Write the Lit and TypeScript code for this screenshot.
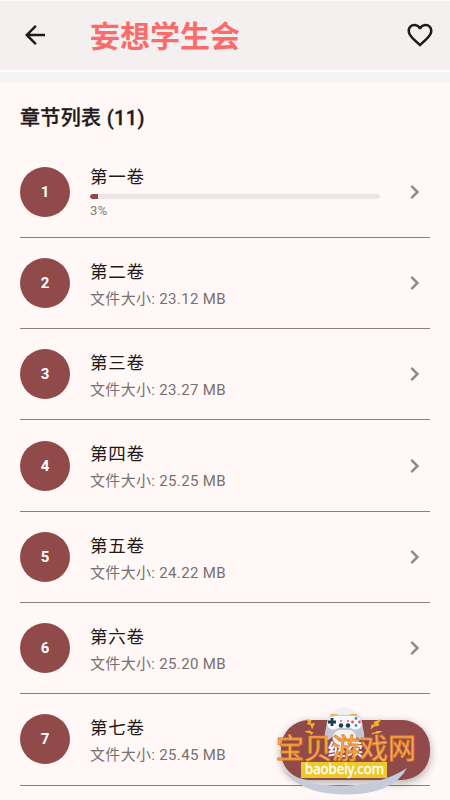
import { LitElement, html, css, svg } from "lit";
import { customElement, property } from "lit/decorators.js";

interface Chapter { n: number; title: string; size?: string; progress?: number; }

const chapters: Chapter[] = [
  { n: 1, title: "第一卷", progress: 3 },
  { n: 2, title: "第二卷", size: "23.12 MB" },
  { n: 3, title: "第三卷", size: "23.27 MB" },
  { n: 4, title: "第四卷", size: "25.25 MB" },
  { n: 5, title: "第五卷", size: "24.22 MB" },
  { n: 6, title: "第六卷", size: "25.20 MB" },
  { n: 7, title: "第七卷", size: "25.45 MB" },
];

@customElement("chapter-row")
class ChapterRow extends LitElement {
  @property({ attribute: false }) chapter!: Chapter;

  static styles = css`
    :host { display: flex; box-sizing: border-box; height: 91.3px; padding-right: 2px; align-items: center; border-bottom: 1.5px solid #8d7f7e; }
    .badge { width: 50px; height: 50px; border-radius: 50%; background: #904a49; color: #fff; display: flex; align-items: center; justify-content: center; font-size: 15px; font-weight: 700; flex: none; }
    .body { margin-left: 20px; width: 290px; flex: none; }
    .sized { padding-top: 2.4px; }
    .title { font-size: 17.5px; line-height: 26px; letter-spacing: 0.8px; color: #231919; white-space: nowrap; }
    .size { font-size: 15px; line-height: 22px; margin-top: 3px; letter-spacing: 0.33px; color: #787070; white-space: nowrap; }
    .track { height: 5px; margin-top: 4px; border-radius: 2.5px; background: #ebe6e5; overflow: hidden; }
    .fill { height: 5px; width: 0; border-radius: 2.5px 0 0 2.5px; background: #904a49; }
    .pct { font-size: 13px; line-height: 16px; margin-top: 4px; padding-bottom: 1px; letter-spacing: 0.5px; color: #837b7b; }
    .chev { width: 28px; height: 28px; margin-left: 21px; fill: #8d8786; stroke: #8d8786; stroke-width: 0.3px; }
  `;

  render() {
    const c = this.chapter;
    return html`
      <div class="badge">${c.n}</div>
      <div class="body ${c.size ? "sized" : ""}">
        <div class="title">${c.title}</div>
        ${c.progress !== undefined
          ? html`<div class="track"><div class="fill" style="width:${c.progress * 0.87}%"></div></div>
              <div class="pct">${c.progress}%</div>`
          : html`<div class="size">文件大小: ${c.size}</div>`}
      </div>
      <svg class="chev" viewBox="0 0 24 24"><path d="M10 6 8.59 7.41 13.17 12l-4.58 4.59L10 18l6-6z" /></svg>
    `;
  }
}

const pad = svg`
  <circle cx="69.500" cy="24" r="16.500" fill="#edf0f0"/>
  <path d="M55.500 15h7M75 15h7" stroke="#edae3b" stroke-width="2.200"/>
  <path d="M55 16q7-2 14.500-1 7.500-1 14.500 1 3 3 4 12 2 8 1 11-3 3-8-3-3-6-6-6H64q-3 0-6 6-5 6-8 3-1-3 1-11 1-9 4-12z" fill="#c3c6d2"/>
  <ellipse cx="69.500" cy="38" rx="12" ry="8" fill="#f1f2f2"/>
  <path d="M55 17q7-2 14.500-1 7.500-1 14.500 1 4 5 2 10-5 5-10 1H63q-6 4-10-1-2-5 2-10z" fill="#f7f8fb"/>
  <path d="M57 18v8M53 22h8" stroke="#193f52" stroke-width="2.800"/>
  <g fill="#193f52"><circle cx="66" cy="25.500" r="2.200"/><circle cx="73" cy="25.500" r="2.200"/></g>
  <g fill="#e44d5b"><circle cx="66" cy="21" r="0.900"/><circle cx="73" cy="21" r="0.900"/><circle cx="77.500" cy="22" r="1.400"/><circle cx="84.500" cy="22" r="1.400"/></g>
  <g fill="#2f9bb5"><circle cx="81" cy="18.500" r="1.400"/><circle cx="81" cy="25.500" r="1.400"/></g>
  <g fill="#f5b12c"><path d="M30.500 19l6 1-1 3.500 4.500-.5-3 6.500-1.500-4.500-4-1 2-2zM29.500 31l6-.500 0 1 3 1-2 2.500-1-1.500-4-1zM106.500 19l-8 3 1 2.500-3 0-1 5 4-3 5-1-1-2zM107.500 31l-6 0-1 1-4 1 1 1.500 2-1 4 0z"/></g>
`;

@customElement("app-root")
class AppRoot extends LitElement {
  static styles = css`
    :host { display: block; position: relative; width: 450px; height: 800px; overflow: hidden; background: #fff8f6; font-family: Roboto, "Noto Sans CJK SC", sans-serif; }
    .header { box-sizing: border-box; height: 70px; background: #f4f0ef; border-top: 1px solid #fcf9f8; display: flex; align-items: center; padding: 0 15px 2px 20px; }
    .back, .heart { width: 30px; height: 30px; fill: #211a1a; }
    .name { flex: 1; margin-left: 40px; font-size: 30px; line-height: 44px; font-weight: 700; color: #fa6c6b; padding-top: 5px; }
    .band { height: 10px; margin-top: 2px; background: #f4f4f4; }
    .list { padding: 0 20px; }
    .heading { height: 64.5px; padding-top: 20px; box-sizing: border-box; font-size: 20px; line-height: 32px; font-weight: 500; letter-spacing: 0.35px; color: #231919; -webkit-text-stroke: 0.3px #231919; }
    .fab { position: absolute; left: 281px; top: 720px; width: 149px; height: 60px; border-radius: 28px; background: #904a49; box-shadow: 0 4px 8px #0003, 0 1px 10px #0002; color: #fff; font-size: 17.5px; font-weight: 700; line-height: 61px; text-indent: 47px; }
    .mark { position: absolute; left: 275px; top: 700px; width: 145px; height: 98px; overflow: visible; }
    .brand { font-size: 28px; fill: #f6b56c; stroke: #e58222; stroke-width: 0.9px; }
    .url { font-size: 14.5px; font-family: "Noto Sans", sans-serif; fill: #fff; stroke: #fff; stroke-width: 0.4px; }
  `;

  render() {
    return html`
      <div class="header">
        <svg class="back" viewBox="0 0 24 24"><path d="M20 11H7.830l5.590-5.590L12 4l-8 8 8 8 1.410-1.410L7.830 13H20z" /></svg>
        <div class="name">妄想学生会</div>
        <svg class="heart" viewBox="0 0 24 24"><path d="M16.500 3c-1.740 0-3.410.810-4.500 2.090C10.910 3.810 9.240 3 7.500 3 4.420 3 2 5.420 2 8.500c0 3.780 3.400 6.860 8.550 11.540L12 21.350l1.450-1.320C18.600 15.360 22 12.280 22 8.500 22 5.420 19.580 3 16.500 3zm-4.400 15.550l-.1.100-.1-.1C7.140 14.240 4 11.390 4 8.500 4 6.500 5.500 5 7.500 5c1.540 0 3.040.990 3.570 2.360h1.870C13.460 5.990 14.960 5 16.500 5c2 0 3.500 1.500 3.500 3.500 0 2.890-3.140 5.740-7.900 10.050z" /></svg>
      </div>
      <div class="band"></div>
      <div class="list">
        <div class="heading">章节列表 (11)</div>
        ${chapters.map((c) => html`<chapter-row .chapter=${c}></chapter-row>`)}
      </div>
      <div class="fab">继续</div>
      <svg class="mark" viewBox="0 0 145 98">
        ${pad}
        <path d="M6 68Q22 85 66 86 106 85 132 68 118 94 72 94.500 26 95 6 68z" fill="#c6cbd9" />
        <rect x="26" y="62" width="86" height="16" fill="#edc928" />
        <text class="brand" x="1" y="59" textLength="140">宝贝游戏网</text>
        <text class="url" x="30" y="74" textLength="79" lengthAdjust="spacingAndGlyphs">baobeiy.com</text>
      </svg>
    `;
  }
}
